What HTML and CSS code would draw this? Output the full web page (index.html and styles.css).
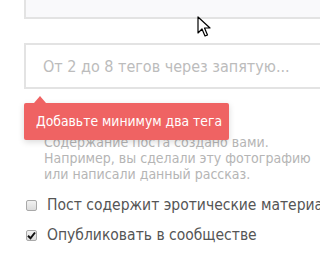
FILE: index.html
```html
<!DOCTYPE html>
<html>
  <head lang="ru">
    <meta charset="UTF-8" />
    <title></title>
    <link rel="stylesheet" href="styles.css">
  </head>

  <body>
    <div class="form">
      <div class="box-top"></div>

      <div class="field">
        <input class="tags" type="text" placeholder="От 2 до 8 тегов через запятую..." />
        <div class="tooltip">Добавьте минимум два тега</div>
      </div>

      <p class="hint">
        Содержание поста создано вами.<br />
        Например, вы сделали эту фотографию<br />
        или написали данный рассказ.
      </p>

      <label class="check">
        <span class="box"></span>
        <span>Пост содержит эротические материалы</span>
      </label>
      <label class="check">
        <span class="box checked">
          <svg width="9" height="9" viewBox="0 0 9 9">
            <path d="M1 4.8 L3.5 7.3 L8 1.5" fill="none" stroke="#111" stroke-width="2" />
          </svg>
        </span>
        <span>Опубликовать в сообществе</span>
      </label>
    </div>

    <svg class="cursor" width="14" height="22" viewBox="0 0 14 22">
      <path d="M1 1 L1 17 L5 13 L8 20 L10.5 19 L7.5 12 L13 12 Z" fill="#fff" stroke="#000" stroke-width="1.2" stroke-linejoin="round" />
    </svg>
  </body>
</html>
```

FILE: styles.css
```css
* {
  padding: 0;
  margin: 0;
  box-sizing: border-box;
}

body {
  background: #fff;
  overflow: hidden;
  width: 320px;
  height: 254px;
  position: relative;
  font-family: "DejaVu Sans", Verdana, sans-serif;
  font-stretch: condensed;
}

.form {
  padding-left: 24px;
  width: 420px;
}

.box-top {
  height: 20px;
  margin-top: -1px;
  border: 2px solid #e3e3e3;
  border-top: none;
  background: #f9f9fb;
}

.field {
  position: relative;
  margin-top: 24px;
}

.tags {
  display: block;
  width: 100%;
  height: 46px;
  border: 2px solid #e3e3e3;
  padding-left: 17px;
  font: 16px "DejaVu Sans", Verdana, sans-serif;
  font-stretch: condensed;
  outline: none;
}

.tags::placeholder {
  color: #bcbcbc;
}

.tooltip {
  position: absolute;
  left: 0;
  top: 60px;
  width: 205px;
  height: 37px;
  padding: 9px 0 0 12px;
  background-color: #ef6363;
  border-radius: 2px;
  box-shadow: 0 2px 6px rgba(0, 0, 0, 0.15);
  color: #fff;
  font-size: 13.8px;
  line-height: 19px;
  white-space: nowrap;
  z-index: 2;
}

.tooltip::before {
  content: "";
  position: absolute;
  left: 10px;
  top: -7px;
  border-left: 6px solid transparent;
  border-right: 6px solid transparent;
  border-bottom: 7px solid #ef6363;
}

.hint {
  margin-top: 45px;
  padding-left: 20px;
  color: #b5b5b5;
  font-size: 14px;
  line-height: 16px;
  white-space: nowrap;
}

.check {
  display: flex;
  align-items: center;
  gap: 10px;
  height: 30px;
  color: #555;
  font-size: 15.5px;
  white-space: nowrap;
}

.check:first-of-type {
  margin-top: 8px;
}

.box {
  display: flex;
  align-items: center;
  justify-content: center;
  width: 11px;
  height: 11px;
  margin-left: 2px;
  border: 1px solid #a9a9a9;
  border-radius: 2px;
  background: linear-gradient(#f2f2f2, #dcdcdc);
}

.cursor {
  position: absolute;
  left: 197px;
  top: 16px;
}
```
